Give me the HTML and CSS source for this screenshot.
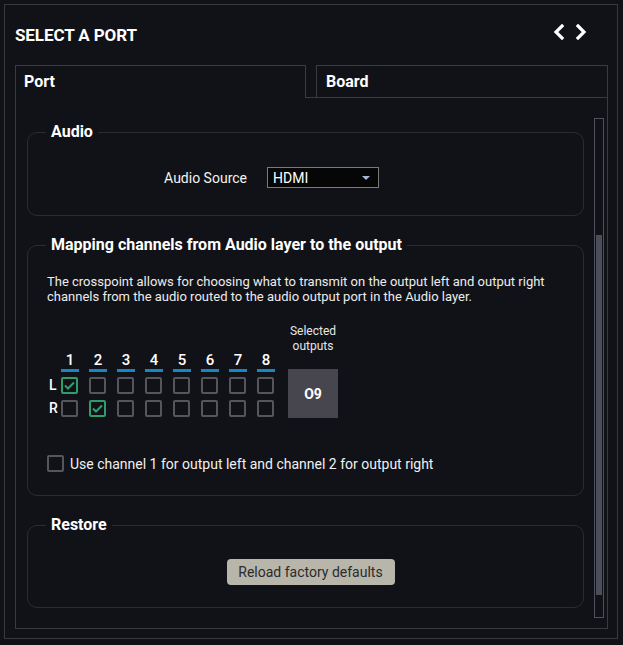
FILE: index.html
```html
<!DOCTYPE html>
<html>
<head>
<meta charset="utf-8">
<link rel="stylesheet" href="styles.css">
</head>
<body>
<div class="panel">
  <div class="header">
    <h1 class="title">SELECT A PORT</h1>
    <div class="nav">
      <svg class="chev" width="12" height="16" viewBox="0 0 12 16"><polyline points="9,2 3,8 9,14" fill="none" stroke="#fff" stroke-width="3.2" stroke-linecap="square" stroke-linejoin="miter"/></svg>
      <svg class="chev" width="12" height="16" viewBox="0 0 12 16"><polyline points="3,2 9,8 3,14" fill="none" stroke="#fff" stroke-width="3.2" stroke-linecap="square" stroke-linejoin="miter"/></svg>
    </div>
  </div>
  <div class="tabs">
    <div class="tab active">Port</div>
    <div class="tab-rest"><div class="tab">Board</div></div>
  </div>
  <div class="content">
    <div class="scroll">
      <fieldset class="group audio">
        <legend>Audio</legend>
        <div class="form-row">
          <label class="form-label">Audio Source</label>
          <div class="select"><span>HDMI</span><span class="caret"></span></div>
        </div>
      </fieldset>

      <fieldset class="group mapping">
        <legend>Mapping channels from Audio layer to the output</legend>
        <p class="desc">The crosspoint allows for choosing what to transmit on the output left and output right channels from the audio routed to the audio output port in the Audio layer.</p>
        <div class="xp">
          <div class="xp-grid">
            <div class="corner"></div>
            <div class="num"><span>1</span></div>
            <div class="num"><span>2</span></div>
            <div class="num"><span>3</span></div>
            <div class="num"><span>4</span></div>
            <div class="num"><span>5</span></div>
            <div class="num"><span>6</span></div>
            <div class="num"><span>7</span></div>
            <div class="num"><span>8</span></div>

            <div class="rowlabel">L</div>
            <div class="cell"><span class="cb checked"><svg width="13" height="13" viewBox="0 0 13 13"><polyline points="2,6.5 5,9.5 11,3.5" fill="none" stroke="#2fa36f" stroke-width="2"/></svg></span></div>
            <div class="cell"><span class="cb"></span></div>
            <div class="cell"><span class="cb"></span></div>
            <div class="cell"><span class="cb"></span></div>
            <div class="cell"><span class="cb"></span></div>
            <div class="cell"><span class="cb"></span></div>
            <div class="cell"><span class="cb"></span></div>
            <div class="cell"><span class="cb"></span></div>

            <div class="rowlabel r">R</div>
            <div class="cell r"><span class="cb"></span></div>
            <div class="cell r"><span class="cb checked"><svg width="13" height="13" viewBox="0 0 13 13"><polyline points="2,6.5 5,9.5 11,3.5" fill="none" stroke="#2fa36f" stroke-width="2"/></svg></span></div>
            <div class="cell r"><span class="cb"></span></div>
            <div class="cell r"><span class="cb"></span></div>
            <div class="cell r"><span class="cb"></span></div>
            <div class="cell r"><span class="cb"></span></div>
            <div class="cell r"><span class="cb"></span></div>
            <div class="cell r"><span class="cb"></span></div>
          </div>
          <div class="sel">
            <div class="sel-label">Selected<br>outputs</div>
            <div class="sel-box">O9</div>
          </div>
        </div>
        <div class="use-row">
          <span class="cb"></span>
          <span class="use-text">Use channel 1 for output left and channel 2 for output right</span>
        </div>
      </fieldset>

      <fieldset class="group restore">
        <legend>Restore</legend>
        <div class="btn-row"><button class="btn">Reload factory defaults</button></div>
      </fieldset>
    </div>
    <div class="scrollbar"><div class="thumb"></div></div>
  </div>
</div>
</body>
</html>
```

FILE: styles.css
```css
* { box-sizing: border-box; }
html, body {
  margin: 0;
  padding: 0;
  background: #111217;
  color: #fff;
  font-family: Roboto, "Liberation Sans", sans-serif;
}
.panel {
  margin: 4px;
  width: 614px;
  height: 635px;
  border: 1px solid #38393d;
  padding: 0 9px 9px 10px;
  display: flex;
  flex-direction: column;
}
.header {
  height: 60px;
  display: flex;
  align-items: center;
  justify-content: space-between;
}
.title {
  margin: 0;
  font-size: 17px;
  font-weight: 700;
  letter-spacing: -0.1px;
}
.nav {
  display: flex;
  gap: 10px;
  margin-right: 21px;
  margin-top: -6px;
}
.chev { display: block; }
.tabs {
  display: flex;
}
.tab {
  font-size: 16px;
  font-weight: 700;
  border: 1px solid #3a3b40;
  border-bottom: none;
  padding: 0 0 0 8px;
  display: flex;
  align-items: center;
}
.tab.active {
  width: 291px;
  height: 33px;
  padding-bottom: 2px;
}
.tab-rest {
  flex: 1;
  padding-left: 10px;
  border-bottom: 1px solid #3a3b40;
  display: flex;
}
.tab-rest .tab {
  flex: 1;
  height: 32px;
  padding-left: 9px;
  padding-bottom: 1px;
}
.content {
  flex: 1;
  border: 1px solid #3a3b40;
  border-top: none;
  display: flex;
  padding: 0 3px 10px 11px;
  overflow: hidden;
}
.scroll {
  flex: 1;
  padding-top: 24px;
  overflow: hidden;
}
.scrollbar {
  width: 10px;
  margin-left: 10px;
  margin-top: 20px;
  border: 1px solid #4e505c;
  padding: 116px 1px 22px 1px;
}
.thumb {
  height: 100%;
  background: #4c4d5b;
}
.group {
  margin: 0 0 19px 0;
  padding: 0 19px;
  border: 1px solid #2a2c32;
  border-radius: 10px;
  min-width: 0;
}
.group legend {
  font-size: 16px;
  font-weight: 700;
  line-height: 20px;
  padding: 0 5px;
  margin-left: -1px;
}
.audio { padding-top: 25px; padding-bottom: 27px; }
.form-row {
  display: grid;
  grid-template-columns: 200px 112px;
  column-gap: 20px;
  align-items: center;
}
.form-label {
  text-align: right;
  font-size: 14px;
  color: #f2f2f2;
}
.select {
  height: 21px;
  background: #060607;
  border: 1px solid #7a7a7a;
  display: flex;
  align-items: center;
  justify-content: space-between;
  padding: 0 8px 0 5px;
  font-size: 14px;
}
.caret {
  width: 0;
  height: 0;
  border-left: 4px solid transparent;
  border-right: 4px solid transparent;
  border-top: 4px solid #a8b6d6;
  margin-top: 1px;
}
.mapping { padding-top: 19px; padding-bottom: 23px; }
.desc {
  margin: 0;
  font-size: 13px;
  line-height: 15px;
  color: #ececec;
}
.xp {
  display: flex;
  align-items: flex-end;
  margin-top: 19px;
}
.xp-grid {
  display: grid;
  grid-template-columns: 14px repeat(8, 28px);
  grid-template-rows: 21px 17px 17px;
  row-gap: 5px;
  padding-bottom: 2px;
}
.num span {
  display: block;
  width: 18px;
  text-align: center;
  font-size: 15px;
  font-weight: 500;
  line-height: 18px;
  border-bottom: 3px solid #1787c4;
}
.rowlabel {
  font-size: 14px;
  font-weight: 500;
  line-height: 17px;
  padding-left: 2px;
}
.rowlabel.r, .cell.r { margin-top: 1px; }
.cb {
  display: flex;
  align-items: center;
  justify-content: center;
  width: 17px;
  height: 17px;
  border: 2px solid #55565c;
  border-radius: 2px;
  flex: none;
}
.cb.checked { border-color: #2e9c6b; }
.cb svg { display: block; }
.sel {
  margin-left: 3px;
  width: 50px;
  text-align: center;
}
.sel-label {
  font-size: 12px;
  line-height: 15px;
  color: #e6e6e6;
  transform: translateY(1px);
}
.sel-box {
  margin-top: 16px;
  height: 49px;
  background: #47464f;
  display: flex;
  align-items: center;
  justify-content: center;
  font-size: 14px;
  font-weight: 700;
}
.use-row {
  display: flex;
  align-items: center;
  gap: 6px;
  margin-top: 37px;
}
.use-text {
  font-size: 14px;
  color: #f0f0f0;
}
.restore { padding-top: 24px; padding-bottom: 22px; }
.btn-row {
  display: flex;
  justify-content: center;
  padding-left: 10px;
}
.btn {
  height: 26px;
  width: 168px;
  background: #b8b5aa;
  color: #2b2b2b;
  border: none;
  border-radius: 4px;
  font-family: Roboto, "Liberation Sans", sans-serif;
  font-size: 14px;
  padding: 0;
}
```
